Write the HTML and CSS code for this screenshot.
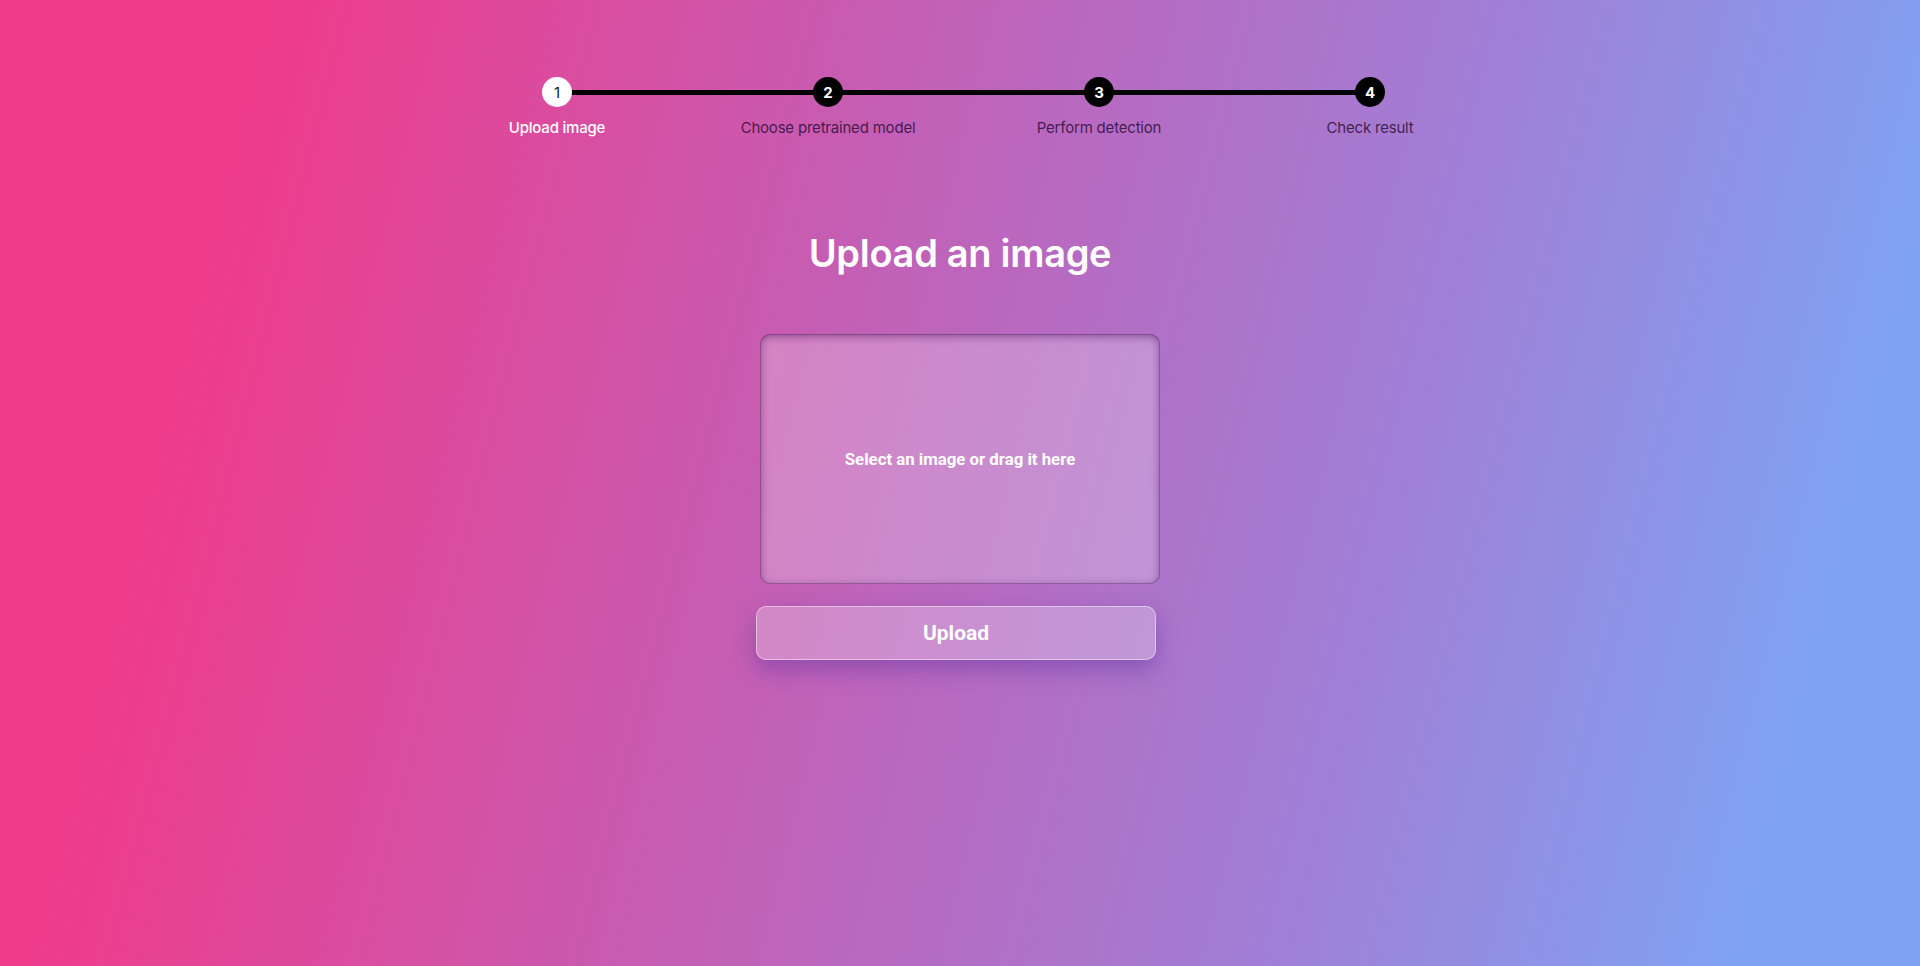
FILE: index.html
```html
<!DOCTYPE html>
<html lang="en">
<head>
<meta charset="utf-8">
<title>Upload image</title>
<link rel="stylesheet" href="styles.css">
</head>
<body>
<div class="page">
  <ol class="stepper">
    <li class="step active"><span class="dot">1</span><span class="label">Upload image</span></li>
    <li class="step"><span class="dot">2</span><span class="label">Choose pretrained model</span></li>
    <li class="step"><span class="dot">3</span><span class="label">Perform detection</span></li>
    <li class="step"><span class="dot">4</span><span class="label">Check result</span></li>
  </ol>
  <h1 class="title">Upload an image</h1>
  <div class="dropzone">Select an image or drag it here</div>
  <button class="upload-btn" type="button">Upload</button>
</div>
</body>
</html>
```
FILE: styles.css
```css
html, body {
  margin: 0;
  padding: 0;
  height: 100%;
}
body {
  background: linear-gradient(104deg, #f03a8a 12%, #c062b8 45%, #a07fd6 70%, #7fa3f3 92%);
  font-family: Inter, "Noto Sans", sans-serif;
  overflow: hidden;
}
.page {
  display: flex;
  flex-direction: column;
  align-items: center;
  padding-top: 77px;
}
.stepper {
  list-style: none;
  margin: 0 0 0 7px;
  padding: 0;
  display: grid;
  grid-template-columns: repeat(4, 271px);
}
.step {
  position: relative;
  display: flex;
  flex-direction: column;
  align-items: center;
}
.step + .step::before {
  content: "";
  position: absolute;
  top: 13px;
  left: calc(-50% + 12px);
  right: calc(50% + 12px);
  height: 5px;
  background: #000;
}
.dot {
  position: relative;
  z-index: 1;
  width: 30px;
  height: 30px;
  border-radius: 50%;
  background: #000;
  color: #fff;
  font-size: 15px;
  font-weight: 700;
  display: flex;
  align-items: center;
  justify-content: center;
}
.step.active .dot {
  background: #fff;
  color: #222;
  font-weight: 400;
}
.label {
  margin-top: 11px;
  font-size: 15px;
  line-height: 20px;
  letter-spacing: -0.2px;
  color: rgba(40, 10, 50, 0.82);
}
.step.active .label {
  color: #fff;
  font-weight: 500;
}
.title {
  margin: 92px 0 0;
  font-size: 38px;
  line-height: 46px;
  font-weight: 600;
  color: #fff;
  letter-spacing: -0.3px;
}
.dropzone {
  margin-top: 58px;
  width: 400px;
  height: 250px;
  box-sizing: border-box;
  border-radius: 10px;
  background: rgba(255, 255, 255, 0.24);
  box-shadow: inset 0 2px 8px rgba(60, 10, 80, 0.5), inset 0 0 0 1px rgba(90, 40, 110, 0.35);
  display: flex;
  align-items: center;
  justify-content: center;
  font-family: Roboto, "Liberation Sans", sans-serif;
  font-weight: 700;
  font-size: 16.8px;
  color: #fff;
}
.upload-btn {
  margin: 22px 8px 0 0;
  width: 400px;
  height: 54px;
  border: 1.5px solid rgba(255, 255, 255, 0.45);
  border-radius: 10px;
  background: rgba(255, 255, 255, 0.26);
  box-shadow: 0 10px 22px rgba(90, 50, 160, 0.45);
  font-family: Roboto, "Liberation Sans", sans-serif;
  font-weight: 700;
  font-size: 21px;
  color: #fff;
  cursor: pointer;
}
```
